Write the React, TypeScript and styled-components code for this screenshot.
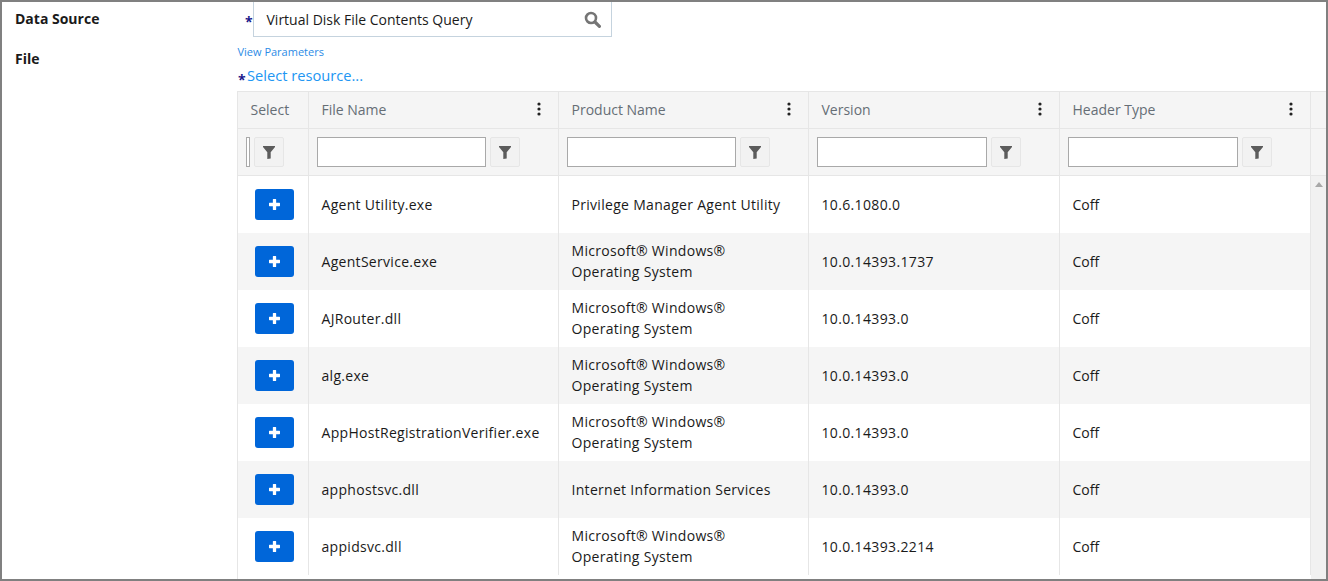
import React from "react";
import styled, { createGlobalStyle } from "styled-components";

const Global = createGlobalStyle`
  html, body { margin: 0; padding: 0; background: #fff; }
  body { font-family: "Open Sans", "Liberation Sans", sans-serif; font-size: 14px; color: #1a1a1a; }
  * { box-sizing: border-box; }
`;

const Frame = styled.div`
  width: 1328px;
  height: 581px;
  border: 2px solid #808080;
  overflow: hidden;
  display: grid;
  grid-template-columns: 235px 1fr;
  background: #fff;
`;

const Labels = styled.div`
  padding: 7px 0 0 13px;
  display: flex;
  flex-direction: column;
  gap: 21px;
`;

const Label = styled.div`
  font-weight: 700;
  font-size: 14px;
  line-height: 19px;
  color: #1a1a1a;
`;

const Main = styled.div`
  display: flex;
  flex-direction: column;
  min-width: 0;
`;

const SourceRow = styled.div`
  display: flex;
  align-items: center;
  padding-left: 8px;
`;

const Star = styled.span`
  color: #1a1a8c;
  font-size: 14px;
  font-weight: 700;
  line-height: 14px;
  width: 8px;
  flex: none;
  padding-top: 5px;
`;

const SourceBox = styled.div`
  width: 359px;
  height: 35px;
  border: 1px solid #c5d3de;
  border-top: none;
  display: flex;
  align-items: center;
  justify-content: space-between;
  padding: 0 10px 0 12.5px;
  font-size: 14px;
  color: #1a1a1a;
`;

const ParamLink = styled.a`
  display: block;
  margin: 8px 0 0 0.5px;
  font-size: 11px;
  line-height: 14px;
  color: #2b8be6;
`;

const ResourceRow = styled.div`
  display: flex;
  align-items: flex-end;
  margin-top: 6px;
  height: 21px;
  padding-left: 1px;
`;

const ResourceStar = styled(Star)`
  width: 9px;
  padding-top: 0;
  line-height: 12px;
`;

const ResourceLink = styled.a`
  font-size: 14.67px;
  line-height: 20px;
  padding-bottom: 1px;
  color: #2196f3;
`;

const Table = styled.div`
  margin-top: 5px;
  border-left: 1px solid #e6e6e6;
  border-top: 1px solid #e6e6e6;
`;

const columns = "71px 250px 250px 251px 251px 15px";

const HeadRow = styled.div`
  display: grid;
  grid-template-columns: ${columns};
  height: 37px;
  background: #f5f5f5;
  border-bottom: 1px solid #e6e6e6;
`;

const FilterRow = styled.div`
  display: grid;
  grid-template-columns: ${columns};
  height: 47px;
  background: #f5f5f5;
  border-bottom: 1px solid #e6e6e6;
`;

const HeadCell = styled.div`
  border-right: 1px solid #e6e6e6;
  display: flex;
  align-items: center;
  justify-content: space-between;
  padding: 0 17px 2px 12.5px;
  color: #666e75;
  font-size: 14px;
`;

const Kebabbed = styled.span`
  display: flex;
  margin-top: -1px;
`;

const FilterCell = styled.div`
  border-right: 1px solid #e6e6e6;
  display: flex;
  align-items: center;
  gap: 4px;
  padding-left: 8px;
`;

const Spacer = styled.div``;

const FilterInput = styled.input<{ $w: number }>`
  width: ${(p) => p.$w}px;
  height: 30px;
  border: 1px solid #a9a9a9;
  background: #fff;
  padding: 0;
  flex: none;
`;

const FilterButton = styled.button`
  width: 30px;
  height: 30px;
  flex: none;
  padding: 0;
  background: #f2f2f2;
  border: 1px solid #e6e6e6;
  border-radius: 2px;
  display: flex;
  align-items: center;
  justify-content: center;
`;

const BodyWrap = styled.div`
  display: grid;
  grid-template-columns: 1073px 15px;
`;

const Rows = styled.div`
  display: flex;
  flex-direction: column;
`;

const Row = styled.div<{ $alt: boolean }>`
  display: grid;
  grid-template-columns: 71px 250px 250px 251px 251px;
  height: 57px;
  background: ${(p) => (p.$alt ? "#f5f5f5" : "#fff")};
  flex: none;
`;

const Cell = styled.div<{ $spacing?: number }>`
  border-right: 1px solid #e6e6e6;
  display: flex;
  align-items: center;
  padding: 0 12.5px 1px;
  line-height: 21px;
  color: #1a1a1a;
  font-size: 14px;
  letter-spacing: ${(p) => p.$spacing ?? 0.3}px;
  white-space: pre-line;
`;

const SelectCell = styled(Cell)`
  padding: 0 0 0 17px;
`;

const AddButton = styled.button`
  width: 39px;
  height: 31px;
  padding: 0;
  background: #0066d9;
  border: none;
  border-radius: 3px;
  display: flex;
  align-items: center;
  justify-content: center;
`;

const Scrollbar = styled.div`
  background: #f1f1f1;
  display: flex;
  justify-content: center;
  padding-top: 6px;
  height: 405px;
`;

const SearchIcon = () => (
  <svg width="17" height="17" viewBox="0 0 17 17" fill="none">
    <circle cx="7" cy="7" r="5" stroke="#757575" strokeWidth="2.6" />
    <path d="M11 11l4.4 4.4" stroke="#757575" strokeWidth="3.2" strokeLinecap="round" />
  </svg>
);

const Kebab = () => (
  <svg width="4" height="14" viewBox="0 0 4 14" fill="#222">
    <circle cx="2" cy="2" r="1.6" />
    <circle cx="2" cy="7" r="1.6" />
    <circle cx="2" cy="12" r="1.6" />
  </svg>
);

const Funnel = () => (
  <svg width="12" height="13" viewBox="0 0 12 13" fill="#5c5c5c">
    <path d="M0 0h12v1L7.7 6.2V12.4L4.3 13V6.2L0 1z" />
  </svg>
);

const Plus = () => (
  <svg width="11" height="11" viewBox="0 0 10 10" fill="#fff">
    <path d="M3.5 0.5a.5.5 0 0 1 .5-.5h2a.5.5 0 0 1 .5.5V3.5h3a.5.5 0 0 1 .5.5v2a.5.5 0 0 1-.5.5h-3v3a.5.5 0 0 1-.5.5H4a.5.5 0 0 1-.5-.5v-3h-3A.5.5 0 0 1 0 6V4a.5.5 0 0 1 .5-.5h3z" />
  </svg>
);

const ScrollUp = () => (
  <svg width="8" height="5" viewBox="0 0 8 5" fill="#a8a8a8">
    <path d="M4 0l4 5H0z" />
  </svg>
);

const MS = "Microsoft® Windows®\nOperating System";

const data: [string, string, string][] = [
  ["Agent Utility.exe", "Privilege Manager Agent Utility", "10.6.1080.0"],
  ["AgentService.exe", MS, "10.0.14393.1737"],
  ["AJRouter.dll", MS, "10.0.14393.0"],
  ["alg.exe", MS, "10.0.14393.0"],
  ["AppHostRegistrationVerifier.exe", MS, "10.0.14393.0"],
  ["apphostsvc.dll", "Internet Information Services", "10.0.14393.0"],
  ["appidsvc.dll", MS, "10.0.14393.2214"],
];

const heads = ["File Name", "Product Name", "Version", "Header Type"];
const inputWidths = [169, 169, 170, 170];

export default function App() {
  return (
    <>
      <Global />
      <Frame>
        <Labels>
          <Label>Data Source</Label>
          <Label>File</Label>
        </Labels>
        <Main>
          <SourceRow>
            <Star>*</Star>
            <SourceBox>
              <span>Virtual Disk File Contents Query</span>
              <SearchIcon />
            </SourceBox>
          </SourceRow>
          <ParamLink>View Parameters</ParamLink>
          <ResourceRow>
            <ResourceStar>*</ResourceStar>
            <ResourceLink>Select resource...</ResourceLink>
          </ResourceRow>
          <Table>
            <HeadRow>
              <HeadCell>Select</HeadCell>
              {heads.map((h) => (
                <HeadCell key={h}>
                  <span>{h}</span>
                  <Kebabbed><Kebab /></Kebabbed>
                </HeadCell>
              ))}
              <Spacer />
            </HeadRow>
            <FilterRow>
              <FilterCell>
                <FilterInput $w={4} />
                <FilterButton><Funnel /></FilterButton>
              </FilterCell>
              {inputWidths.map((w, i) => (
                <FilterCell key={i}>
                  <FilterInput $w={w} />
                  <FilterButton><Funnel /></FilterButton>
                </FilterCell>
              ))}
              <Spacer />
            </FilterRow>
            <BodyWrap>
              <Rows>
                {data.map((d, i) => (
                  <Row key={d[0]} $alt={i % 2 === 1}>
                    <SelectCell>
                      <AddButton><Plus /></AddButton>
                    </SelectCell>
                    <Cell>{d[0]}</Cell>
                    <Cell>{d[1]}</Cell>
                    <Cell $spacing={0.35}>{d[2]}</Cell>
                    <Cell $spacing={0}>Coff</Cell>
                  </Row>
                ))}
              </Rows>
              <Scrollbar><ScrollUp /></Scrollbar>
            </BodyWrap>
          </Table>
        </Main>
      </Frame>
    </>
  );
}
